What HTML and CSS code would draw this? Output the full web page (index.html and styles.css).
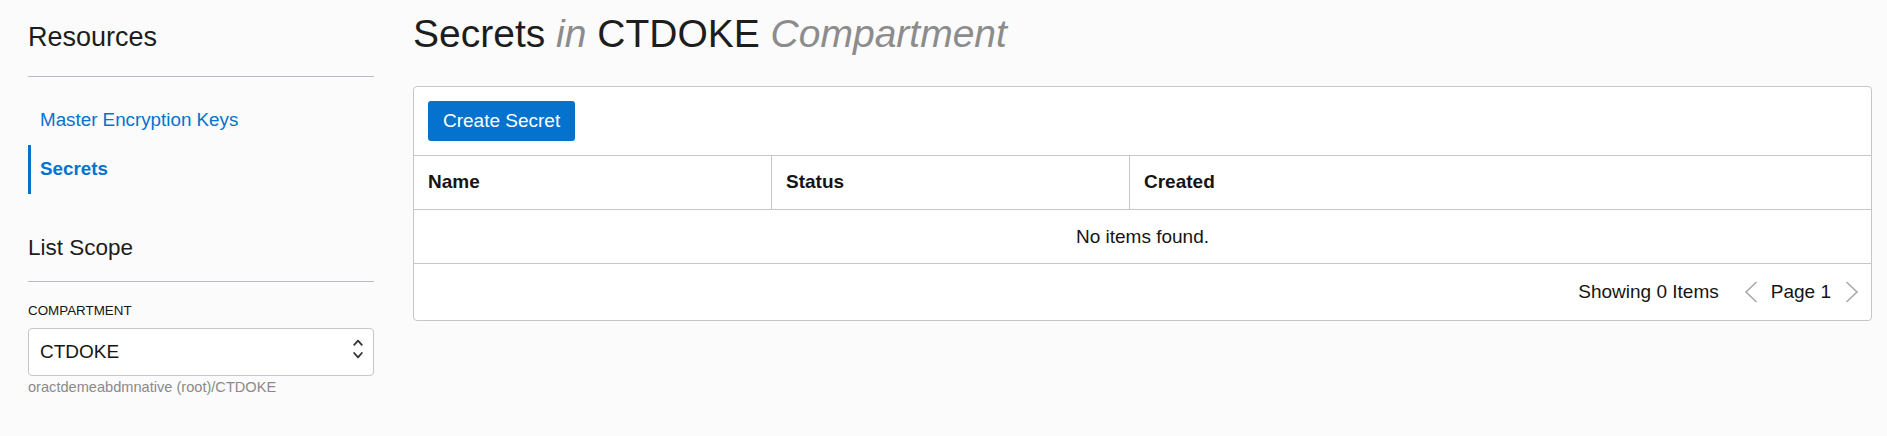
FILE: index.html
```html
<!DOCTYPE html>
<html lang="en">
<head>
<meta charset="utf-8">
<title>Secrets in CTDOKE Compartment</title>
<link rel="stylesheet" href="styles.css">
</head>
<body>
<div class="page">
  <aside class="sidebar">
    <h2 class="side-title">Resources</h2>
    <nav class="side-nav">
      <a class="nav-item" href="#">Master Encryption Keys</a>
      <a class="nav-item active" href="#">Secrets</a>
    </nav>
    <h3 class="scope-title">List Scope</h3>
    <div class="field-label">COMPARTMENT</div>
    <div class="select">
      <span class="select-value">CTDOKE</span>
      <svg class="select-arrows" width="10" height="24" viewBox="0 0 10 24" aria-hidden="true">
        <polyline points="1.2,5.8 5,1.6 8.8,5.8" fill="none" stroke="#333" stroke-width="1.8" stroke-linecap="round" stroke-linejoin="round"/>
        <polyline points="1.2,14 5,18.3 8.8,14" fill="none" stroke="#333" stroke-width="1.8" stroke-linecap="round" stroke-linejoin="round"/>
      </svg>
    </div>
    <div class="field-help">oractdemeabdmnative (root)/CTDOKE</div>
  </aside>

  <main class="main">
    <h1 class="page-title">Secrets <em>in</em> CTDOKE <em>Compartment</em></h1>
    <section class="card">
      <div class="toolbar">
        <button class="btn-primary" type="button">Create Secret</button>
      </div>
      <div class="table">
        <div class="thead">
          <div class="th">Name</div>
          <div class="th">Status</div>
          <div class="th">Created</div>
        </div>
        <div class="empty">No items found.</div>
      </div>
      <div class="pager">
        <span class="pager-count">Showing 0 Items</span>
        <svg class="chev" width="14" height="22" viewBox="0 0 14 22" aria-hidden="true">
          <polyline points="12.5,1 2,11 12.5,21" fill="none" stroke="#a9a9a9" stroke-width="1.6"/>
        </svg>
        <span class="pager-page">Page 1</span>
        <svg class="chev" width="14" height="22" viewBox="0 0 14 22" aria-hidden="true">
          <polyline points="1.5,1 12,11 1.5,21" fill="none" stroke="#a9a9a9" stroke-width="1.6"/>
        </svg>
      </div>
    </section>
  </main>
</div>
</body>
</html>
```

FILE: styles.css
```css
* {
  box-sizing: border-box;
}

html, body {
  margin: 0;
  padding: 0;
  background: #fbfbfb;
}

body {
  font-family: "Liberation Sans", Arial, Helvetica, sans-serif;
  color: #161513;
}

.page {
  display: flex;
  align-items: flex-start;
  padding-left: 28px;
}

/* ---------- Sidebar ---------- */
.sidebar {
  width: 346px;
  flex: 0 0 346px;
}

.side-title {
  margin: 21px 0 0;
  padding-bottom: 23px;
  font-size: 27px;
  line-height: 32px;
  font-weight: normal;
  color: #1d1d1d;
  border-bottom: 1px solid #b9bdc6;
}

.side-nav {
  margin-top: 19px;
  display: flex;
  flex-direction: column;
}

.nav-item {
  display: block;
  height: 49px;
  line-height: 47px;
  padding-left: 9px;
  border-left: 3px solid transparent;
  font-size: 18.8px;
  color: #0572ce;
  text-decoration: none;
}

.nav-item.active {
  border-left-color: #0572ce;
  font-weight: bold;
}

.scope-title {
  margin: 40px 0 0;
  padding-bottom: 20px;
  font-size: 22.5px;
  line-height: 27px;
  font-weight: normal;
  color: #1d1d1d;
  border-bottom: 1px solid #b9bdc6;
}

.field-label {
  margin-top: 21px;
  font-size: 13.4px;
  line-height: 16px;
  color: #161513;
}

.select {
  margin-top: 9px;
  height: 48px;
  display: flex;
  align-items: center;
  justify-content: space-between;
  padding: 0 10px 0 11px;
  background: #fff;
  border: 1px solid #c4c6cc;
  border-radius: 4px;
}

.select-value {
  font-size: 19px;
  color: #161513;
}

.select-arrows {
  display: block;
  margin-top: -3px;
}

.field-help {
  margin-top: 3px;
  font-size: 14.6px;
  line-height: 17px;
  color: #8a8a8a;
}

/* ---------- Main ---------- */
.main {
  flex: 1;
  margin-left: 39px;
  padding-right: 15px;
  min-width: 0;
}

.page-title {
  margin: 12px 0 0;
  font-size: 39px;
  line-height: 44px;
  font-weight: normal;
  color: #1d1d1d;
  white-space: nowrap;
}

.page-title em {
  color: #8c8c8c;
  font-style: italic;
}

.card {
  margin-top: 30px;
  background: #fff;
  border: 1px solid #c4c6cc;
  border-radius: 4px;
}

.toolbar {
  padding: 14px;
  border-bottom: 1px solid #c4c6cc;
}

.btn-primary {
  display: block;
  height: 40px;
  padding: 0 15px;
  border: none;
  border-radius: 3px;
  background: #0572ce;
  color: #fff;
  font-family: inherit;
  font-size: 19px;
}

.thead {
  display: grid;
  grid-template-columns: 358px 358px 1fr;
  border-bottom: 1px solid #c4c6cc;
}

.th {
  height: 53px;
  line-height: 51px;
  padding-left: 14px;
  font-size: 19px;
  font-weight: bold;
  color: #161513;
  border-right: 1px solid #c4c6cc;
}

.th:last-child {
  border-right: none;
}

.empty {
  height: 54px;
  line-height: 53px;
  text-align: center;
  font-size: 19px;
  color: #161513;
  border-bottom: 1px solid #c4c6cc;
}

.pager {
  height: 56px;
  display: flex;
  align-items: center;
  justify-content: flex-end;
  padding-right: 12px;
  font-size: 19px;
  color: #161513;
}

.pager-count {
  margin-right: 25px;
}

.pager-page {
  margin: 0 14px 0 13px;
}

.chev {
  display: block;
}
```
